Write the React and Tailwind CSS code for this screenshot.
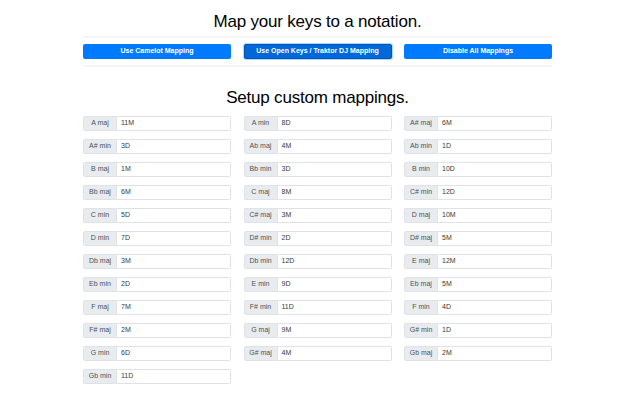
const mappings = [
  ["A maj", "11M"], ["A min", "8D"], ["A# maj", "6M"],
  ["A# min", "3D"], ["Ab maj", "4M"], ["Ab min", "1D"],
  ["B maj", "1M"], ["Bb min", "3D"], ["B min", "10D"],
  ["Bb maj", "6M"], ["C maj", "8M"], ["C# min", "12D"],
  ["C min", "5D"], ["C# maj", "3M"], ["D maj", "10M"],
  ["D min", "7D"], ["D# min", "2D"], ["D# maj", "5M"],
  ["Db maj", "3M"], ["Db min", "12D"], ["E maj", "12M"],
  ["Eb min", "2D"], ["E min", "9D"], ["Eb maj", "5M"],
  ["F maj", "7M"], ["F# min", "11D"], ["F min", "4D"],
  ["F# maj", "2M"], ["G maj", "9M"], ["G# min", "1D"],
  ["G min", "6D"], ["G# maj", "4M"], ["Gb maj", "2M"],
  ["Gb min", "11D"],
];

function App() {
  return (
    <div className="w-[640px] h-[400px] bg-white text-[#212529] overflow-hidden" style={{ fontFamily: '"Liberation Sans", Arial, sans-serif' }}>
      <div className="w-[469px] ml-[83px]">
        <h1 className="text-[17px] tracking-[-0.2px] leading-none text-center pt-[13px] text-black">Map your keys to a notation.</h1>
        <div className="mt-[6px] border-t-[2px] border-b-[2px] border-[#f4f4f4] pt-[6px] pb-[6px] grid grid-cols-3 gap-x-[12.5px]">
          <button className="h-[15px] rounded-[2px] bg-[#007bff] text-white text-[7px] font-bold">Use Camelot Mapping</button>
          <button className="h-[15px] rounded-[2px] bg-[#0068d9] border border-[#0056b3] text-white text-[7px] font-bold shadow-[0_0_0_1px_rgba(0,123,255,0.3)]">Use Open Keys / Traktor DJ Mapping</button>
          <button className="h-[15px] rounded-[2px] bg-[#007bff] text-white text-[7px] font-bold">Disable All Mappings</button>
        </div>
        <h2 className="text-[17px] tracking-[-0.2px] leading-none text-center mt-[22px] text-black">Setup custom mappings.</h2>
        <div className="mt-[10px] grid grid-cols-3 gap-x-[12.5px] gap-y-[8px]">
          {mappings.map(([key, value]) => (
            <div key={key} className="flex h-[15px] text-[7px]">
              <div className="w-[34px] shrink-0 flex items-center justify-center bg-[#e9ecef] border border-[#dfe2e6] rounded-l-[2px] text-[#495057]">{key}</div>
              <div className="flex-1 flex items-center pl-[4px] border border-l-0 border-[#dfe2e6] rounded-r-[2px] text-[#343a40]">{value}</div>
            </div>
          ))}
        </div>
      </div>
    </div>
  );
}

export default App;
